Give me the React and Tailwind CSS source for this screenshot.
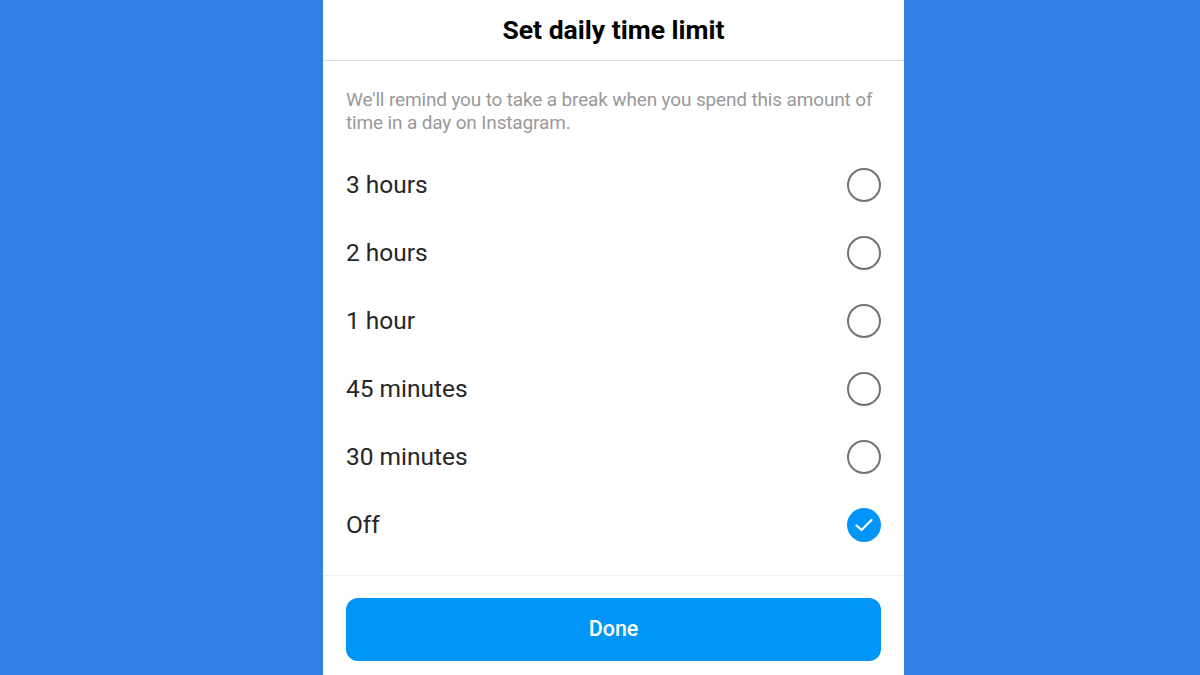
import React from 'react';

const options = ['3 hours', '2 hours', '1 hour', '45 minutes', '30 minutes', 'Off'];

const Radio = ({ checked }) =>
  checked ? (
    <span className="w-[34px] h-[34px] rounded-full bg-[#0095f6] flex items-center justify-center">
      <svg width="24" height="24" viewBox="0 0 24 24" fill="none" stroke="#fff" strokeWidth="2.2" strokeLinecap="round" strokeLinejoin="round">
        <polyline points="4.5,12.5 9.5,17 19.5,7" />
      </svg>
    </span>
  ) : (
    <span className="w-[34px] h-[34px] rounded-full border-[2.5px] border-[#737373]" />
  );

export default function App() {
  return (
    <div className="w-[1200px] h-[675px] bg-[#3380e4] flex pl-[323px] overflow-hidden font-['Roboto',sans-serif]">
      <div className="w-[581px] h-full bg-white flex flex-col">
        <div className="h-[61px] flex items-center justify-center border-b border-[#dbdbdb]">
          <h1 className="text-[26.5px] font-bold text-black">Set daily time limit</h1>
        </div>
        <p className="px-[23px] pt-[27px] text-[19px] leading-[23px] text-[#999999] tracking-[-0.15px]">
          We'll remind you to take a break when you spend this amount of time in a day on Instagram.
        </p>
        <ul className="mt-[17px]">
          {options.map((o) => (
            <li key={o} className="h-[68px] px-[23px] flex items-center justify-between">
              <span className="text-[24.5px] text-[#262626]">{o}</span>
              <Radio checked={o === 'Off'} />
            </li>
          ))}
        </ul>
        <div className="mt-[16px] border-t border-[#efefef] px-[23px] pt-[22px]">
          <button className="w-full h-[63px] rounded-[12px] bg-[#0095f6] text-white text-[21.5px] font-medium">
            Done
          </button>
        </div>
      </div>
    </div>
  );
}
